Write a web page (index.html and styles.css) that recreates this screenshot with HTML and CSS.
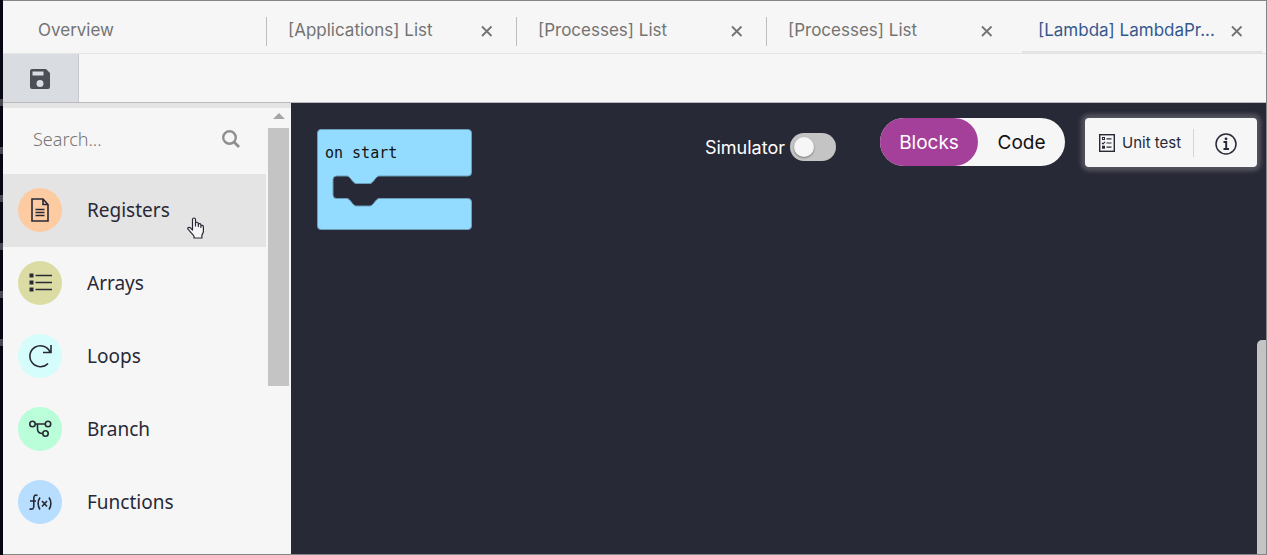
FILE: index.html
```
<!DOCTYPE html>
<html lang="en">
<head>
  <meta charset="UTF-8" />
  <meta name="viewport" content="width=device-width, initial-scale=1.0"/>
  <title>Lambda editor</title>
  <link rel="stylesheet" href="styles.css">
</head>
<body>
  <div class="app">
    <nav class="tabs">
      <div class="tab"><a href="#">Overview</a></div>
      <div class="tab">
        <a href="#">[Applications] List</a>
        <button class="close" aria-label="Close tab"><svg width="12" height="12" viewBox="0 0 12 12"><path d="M1 1.500l9.500 9.500M10.500 1.500L1 11"/></svg></button>
      </div>
      <div class="tab">
        <a href="#">[Processes] List</a>
        <button class="close" aria-label="Close tab"><svg width="12" height="12" viewBox="0 0 12 12"><path d="M1 1.500l9.500 9.500M10.500 1.500L1 11"/></svg></button>
      </div>
      <div class="tab">
        <a href="#">[Processes] List</a>
        <button class="close" aria-label="Close tab"><svg width="12" height="12" viewBox="0 0 12 12"><path d="M1 1.500l9.500 9.500M10.500 1.500L1 11"/></svg></button>
      </div>
      <div class="tab active">
        <a href="#">[Lambda] LambdaPr...</a>
        <button class="close" aria-label="Close tab"><svg width="12" height="12" viewBox="0 0 12 12"><path d="M1 1.500l9.500 9.500M10.500 1.500L1 11"/></svg></button>
      </div>
    </nav>

    <div class="toolbar">
      <button class="save" aria-label="Save">
        <svg width="20" height="20" viewBox="0 0 20 20">
          <path fill="#4d4f57" fill-rule="evenodd" d="M2 0h14l4 4v14a2 2 0 0 1-2 2H2a2 2 0 0 1-2-2V2a2 2 0 0 1 2-2zM2.500 2.500v4h11v-4zM10 11a3.500 3.500 0 1 0 0 7 3.500 3.500 0 0 0 0-7z"/>
        </svg>
      </button>
    </div>

    <div class="main">
      <aside class="sidebar">
        <div class="toolbox">
          <div class="search">
            <input type="text" placeholder="Search..." aria-label="Search" />
            <svg width="18" height="18" viewBox="0 0 18 18" fill="none" stroke="#8f8f8f">
              <circle cx="7.500" cy="7.500" r="6.300" stroke-width="2.400"/>
              <path d="M12 12l5 5" stroke-width="2.800"/>
            </svg>
          </div>

          <button class="category hover">
            <span class="icon registers">
              <svg width="18" height="24" viewBox="0 0 18 24">
                <path d="M1 1h11l5 5.500V23H1zM12 1v5.500h5M4.500 11.500h9M4.500 14.500h9M4.500 17.500h9"/>
              </svg>
            </span>
            Registers
            <svg class="pointer" width="18" height="22" viewBox="0 0 18 22">
              <path fill="#f6f6f6" stroke="#282936" stroke-width="1.200" stroke-linejoin="round" d="M5.500 13V2.500C5.500.500 8.500.500 8.500 2.500V9 6.500c0-1.700 2.800-1.700 2.800.3V9.500 7.800c0-1.500 2.600-1.500 2.600.3V10.500 9.300c0-1.400 2.500-1.200 2.500.5V14.500c0 1.500-1.500 3-1.500 4V21H7v-2C5.500 17 3 14.500 1 12.200c-.8-1.500 1-2.500 2.200-1.500z"/>
            </svg>
          </button>
          <button class="category">
            <span class="icon arrays">
              <svg width="24" height="20" viewBox="0 0 24 20">
                <path d="M7.500 2.500H24M7.500 9.500H24M7.500 16.500H24"/>
                <path d="M1.500 2.500h4M1.500 9.500h4M1.500 16.500h4" stroke-width="4"/>
              </svg>
            </span>
            Arrays
          </button>
          <button class="category">
            <span class="icon loops">
              <svg width="24" height="24" viewBox="0 0 24 24">
                <path d="M20 19.500A10.500 10.500 0 1 1 22 8M23 1v7.500h-8"/>
              </svg>
            </span>
            Loops
          </button>
          <button class="category">
            <span class="icon branch">
              <svg width="24" height="18" viewBox="0 0 24 18">
                <circle cx="4.500" cy="4" r="2.700"/>
                <circle cx="20" cy="4" r="2.700"/>
                <circle cx="17.500" cy="13.500" r="2.700"/>
                <path d="M7.200 4h10M9.500 4v5c0 3 1.500 4.500 5.300 4.500"/>
              </svg>
            </span>
            Branch
          </button>
          <button class="category">
            <span class="icon functions">
              <svg width="24" height="18" viewBox="0 0 24 18">
                <path d="M9.500 2.500C7 1.500 6 2.500 5.800 5V13c0 3-1.500 3.500-4.300 3M2 8h6M12 4.500c-2.500 3.500-2.500 8.500 0 12M21 4.500c2.500 3.500 2.500 8.500 0 12M14 8l5 5.500M19 8l-5 5.500"/>
              </svg>
            </span>
            Functions
          </button>
        </div>
        <div class="scroll">
          <span class="arrow-up"></span>
          <span class="thumb"></span>
        </div>
      </aside>

      <main class="workspace">
        <div class="canvas">
          <svg class="block" width="155" height="101" viewBox="0 0 155 101">
            <path fill="#94dcff" stroke="#6b9db9" d="M3.500.500H151a3.500 3.500 0 0 1 3.500 3.500V43.500a3.500 3.500 0 0 1-3.500 3.500H62c-3 0-6 7.500-9 7.500H39c-3 0-6-7.500-9-7.500H19.500a3.500 3.500 0 0 0-3.500 3.500V66a3.500 3.500 0 0 0 3.500 3.500H30c3 0 6 7.500 9 7.500h14c3 0 6-7.500 9-7.500h89a3.500 3.500 0 0 1 3.500 3.500v24a3.500 3.500 0 0 1-3.500 3.500H4A3.500 3.500 0 0 1 .500 97V4A3.500 3.500 0 0 1 4 .500z"/>
            <text x="8" y="29">on start</text>
          </svg>

          <div class="controls">
            <label class="simulator">Simulator <input type="checkbox" class="switch" /></label>
            <div class="mode">
              <button class="selected">Blocks</button>
              <button>Code</button>
            </div>
            <div class="panel">
              <button class="unit">
                <svg width="16" height="18" viewBox="0 0 16 18" fill="none" stroke="#282936">
                  <rect x=".7" y=".7" width="14.600" height="16.600" stroke-width="1.400"/>
                  <path d="M7.500 4.800h5M7.500 9h5M7.500 13.200h5M3 8.800l1 1 2-2" stroke-width="1.200"/>
                  <rect x="3.500" y="3.500" width="2" height="2"/>
                  <rect x="3.500" y="12.200" width="2" height="2"/>
                </svg>
                Unit test
              </button>
              <button class="info" aria-label="Information">
                <svg width="22" height="22" viewBox="0 0 22 22" fill="none" stroke="#282936">
                  <circle cx="11" cy="11" r="10" stroke-width="1.500"/>
                  <path d="M8.500 9H11.200V16M8.500 16h5.500" stroke-width="1.900"/>
                  <circle cx="11" cy="5.800" r="1.400" fill="#282936" stroke="none"/>
                </svg>
              </button>
            </div>
          </div>
        </div>
        <div class="canvas-scroll"><span></span></div>
      </main>
    </div>
  </div>
</body>
</html>
```
FILE: styles.css
```
:root {
  --light: #f6f6f6;
  --dark: #282936;
  --grey: #c4c4c4;
  --line: #e4e4e4;
  --purple: #a4409a;
}

* {
  box-sizing: border-box;
}

body {
  margin: 0;
  padding-left: 3px;
  min-height: 100vh;
  display: flex;
  background: linear-gradient(#080814, #080814) 0 0 / 3px 99px no-repeat,
    repeating-linear-gradient(#484850 0 7px, #080814 7px 48px) 0 99px / 3px 252px no-repeat,
    #080814;
  font-family: Inter, "Liberation Sans", sans-serif;
}

button, input {
  font: inherit;
  color: inherit;
  border: none;
  background: none;
  padding: 0;
  margin: 0;
}

svg {
  flex: none;
}

.app {
  flex: 1;
  min-width: 0;
  display: flex;
  flex-direction: column;
  background: var(--light);
  border: 1px solid #858585;
  border-left: none;
}

/* tabs */
.tabs {
  display: flex;
  height: 53px;
  border-bottom: 1px solid var(--line);
}

.tab {
  position: relative;
  flex: 0 1 250px;
  display: flex;
  align-items: center;
  justify-content: space-between;
  padding: 6px 23px 0 22px;
  font-size: 17px;
  white-space: nowrap;
  color: #737373;
}

.tab:first-child {
  flex-basis: 263px;
  padding-left: 35px;
}

.tab + .tab::before {
  content: "";
  position: absolute;
  left: 0;
  top: 16px;
  width: 1px;
  height: 29px;
  background: #bdbdbd;
}

.tab.active::before {
  top: auto;
  left: 6px;
  right: 4px;
  bottom: 0;
  width: auto;
  height: 2px;
  background: var(--line);
}

.tab a {
  color: inherit;
  text-decoration: none;
}

.tab.active a {
  color: #35588f;
}

.close {
  display: flex;
  padding-top: 1px;
}

.close svg {
  fill: none;
  stroke: #737373;
  stroke-width: 1.8;
}

/* toolbar */
.toolbar {
  display: flex;
  height: 49px;
  border-bottom: 1px solid #b9b9bd;
}

.save {
  width: 76px;
  display: flex;
  align-items: center;
  justify-content: center;
  padding: 2px 2px 0 0;
  background: #d9dce1;
  border-right: 1px solid #c8c8d0;
}

.main {
  flex: 1;
  display: flex;
}

/* sidebar */
.sidebar {
  width: 288px;
  flex: none;
  display: flex;
  border-top: 5px solid var(--line);
}

.toolbox {
  flex: 1;
}

.search {
  display: flex;
  align-items: center;
  justify-content: space-between;
  height: 66px;
  padding: 0 26px 4px 30px;
}

.search input {
  width: 150px;
  font-family: "Noto Sans", "Open Sans", sans-serif;
  font-size: 18px;
  font-weight: 300;
  outline: none;
}

.search input::placeholder {
  color: #757575;
  opacity: 1;
}

.category {
  position: relative;
  display: flex;
  align-items: center;
  gap: 25px;
  width: 100%;
  height: 73px;
  padding: 0 0 1px 15px;
  font-family: "Noto Sans", sans-serif;
  font-size: 19px;
  color: var(--dark);
  cursor: pointer;
}

.category.hover {
  background: var(--line);
}

.icon {
  display: flex;
  align-items: center;
  justify-content: center;
  width: 44px;
  height: 44px;
  border-radius: 50%;
}

.icon svg {
  fill: none;
  stroke: var(--dark);
  stroke-width: 1.6;
}

.registers { background: #fdcba2; }
.arrays { background: #dbdca3; }
.loops { background: #d4fdfb; }
.branch { background: #b9fed8; }
.functions { background: #b7ddff; }

.pointer {
  position: absolute;
  left: 184px;
  top: 43px;
}

.scroll {
  width: 25px;
  display: flex;
  flex-direction: column;
  align-items: center;
  gap: 9px;
  padding-top: 5px;
}

.arrow-up {
  border: 6px solid transparent;
  border-top: none;
  border-bottom-color: #a5a5a5;
}

.thumb {
  width: 21px;
  height: 258px;
  background: var(--grey);
}

/* workspace */
.workspace {
  flex: 1;
  display: flex;
  background: var(--dark);
}

.canvas {
  flex: 1;
  display: flex;
  align-items: flex-start;
  justify-content: space-between;
}

.block {
  margin: 26px;
}

.block text {
  font-family: "DejaVu Sans Mono", monospace;
  font-size: 15px;
  fill: #111;
}

.controls {
  display: flex;
  align-items: center;
  padding-top: 15px;
}

.simulator {
  display: flex;
  align-items: center;
  gap: 5px;
  margin-right: 44px;
  padding-top: 9px;
  font-size: 18px;
  color: #fff;
}

.switch {
  appearance: none;
  display: flex;
  width: 46px;
  height: 28px;
  padding: 4px;
  border-radius: 14px;
  background: var(--grey);
}

.switch::before {
  content: "";
  width: 20px;
  height: 20px;
  border-radius: 50%;
  background: var(--light);
  box-shadow: 0 1px 2px rgba(0, 0, 0, 0.4);
}

.mode {
  display: flex;
  align-self: flex-start;
  height: 48px;
  margin-right: 20px;
  border-radius: 24px;
  background: var(--light);
}

.mode button {
  width: 87px;
  border-radius: 24px;
  font-size: 19px;
  color: #111;
}

.mode .selected {
  width: 98px;
  background: var(--purple);
  color: #fff;
}

.panel {
  display: flex;
  align-items: center;
  height: 49px;
  border-radius: 4px;
  background: var(--light);
  box-shadow: 0 0 4px 4px rgba(255, 255, 255, 0.2);
}

.unit {
  display: flex;
  align-items: center;
  gap: 7px;
  width: 109px;
  height: 28px;
  padding-left: 14px;
  border-right: 1px solid #d6d6d6;
  font-size: 15px;
  white-space: nowrap;
  color: var(--dark);
}

.info {
  display: flex;
  justify-content: center;
  width: 63px;
  padding-top: 3px;
}

.canvas-scroll {
  width: 9px;
  display: flex;
  padding-top: 237px;
}

.canvas-scroll span {
  flex: 1;
  border-radius: 5px 0 0 0;
  background: var(--grey);
}
```
